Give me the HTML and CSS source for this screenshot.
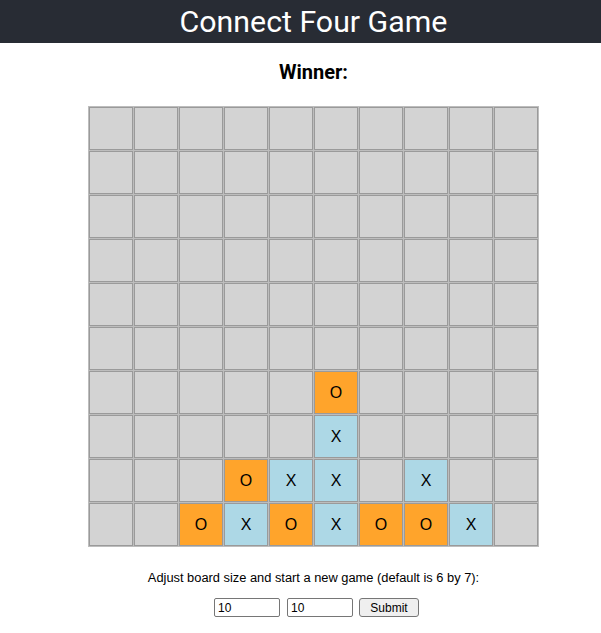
FILE: index.html
```html
<!DOCTYPE html>
<html>
<head>
<meta charset="utf-8">
<link rel="stylesheet" href="styles.css">
</head>
<body>
<div class="app">
  <header class="app-header"><h1 class="title">Connect Four Game</h1></header>
  <h3 class="winner">Winner:</h3>
  <div class="board">
    <div class="cell"></div><div class="cell"></div><div class="cell"></div><div class="cell"></div><div class="cell"></div><div class="cell"></div><div class="cell"></div><div class="cell"></div><div class="cell"></div><div class="cell"></div>
    <div class="cell"></div><div class="cell"></div><div class="cell"></div><div class="cell"></div><div class="cell"></div><div class="cell"></div><div class="cell"></div><div class="cell"></div><div class="cell"></div><div class="cell"></div>
    <div class="cell"></div><div class="cell"></div><div class="cell"></div><div class="cell"></div><div class="cell"></div><div class="cell"></div><div class="cell"></div><div class="cell"></div><div class="cell"></div><div class="cell"></div>
    <div class="cell"></div><div class="cell"></div><div class="cell"></div><div class="cell"></div><div class="cell"></div><div class="cell"></div><div class="cell"></div><div class="cell"></div><div class="cell"></div><div class="cell"></div>
    <div class="cell"></div><div class="cell"></div><div class="cell"></div><div class="cell"></div><div class="cell"></div><div class="cell"></div><div class="cell"></div><div class="cell"></div><div class="cell"></div><div class="cell"></div>
    <div class="cell"></div><div class="cell"></div><div class="cell"></div><div class="cell"></div><div class="cell"></div><div class="cell"></div><div class="cell"></div><div class="cell"></div><div class="cell"></div><div class="cell"></div>
    <div class="cell"></div><div class="cell"></div><div class="cell"></div><div class="cell"></div><div class="cell"></div><div class="cell o">O</div><div class="cell"></div><div class="cell"></div><div class="cell"></div><div class="cell"></div>
    <div class="cell"></div><div class="cell"></div><div class="cell"></div><div class="cell"></div><div class="cell"></div><div class="cell x">X</div><div class="cell"></div><div class="cell"></div><div class="cell"></div><div class="cell"></div>
    <div class="cell"></div><div class="cell"></div><div class="cell"></div><div class="cell o">O</div><div class="cell x">X</div><div class="cell x">X</div><div class="cell"></div><div class="cell x">X</div><div class="cell"></div><div class="cell"></div>
    <div class="cell"></div><div class="cell"></div><div class="cell o">O</div><div class="cell x">X</div><div class="cell o">O</div><div class="cell x">X</div><div class="cell o">O</div><div class="cell o">O</div><div class="cell x">X</div><div class="cell"></div>
  </div>
  <p class="hint">Adjust board size and start a new game (default is 6 by 7):</p>
  <form class="size-form">
    <input class="size-input" type="text" value="10">
    <input class="size-input" type="text" value="10">
    <button class="submit" type="button">Submit</button>
  </form>
</div>
</body>
</html>
```

FILE: styles.css
```css
html, body {
  margin: 0;
  padding: 0;
  overflow: hidden;
  background: #fff;
}
.app {
  width: 627px;
  text-align: center;
  font-family: Roboto, "Liberation Sans", sans-serif;
}
.app-header {
  background: #282c34;
  height: 43px;
  display: flex;
  align-items: center;
  justify-content: center;
}
.title {
  margin: 0;
  color: #fff;
  font-weight: 400;
  font-size: 30.3px;
  line-height: 43px;
}
.winner {
  margin: 18px 0 0;
  font-size: 20px;
  line-height: 23px;
  font-weight: 700;
  color: #000;
}
.board {
  margin: 22px auto 0;
  width: 449px;
  display: grid;
  grid-template-columns: repeat(10, 44px);
  grid-auto-rows: 43px;
  gap: 1px;
  border: 1px solid #bdbdbd;
  background: #bdbdbd;
}
.cell {
  box-sizing: border-box;
  background: #d3d3d3;
  border: 1px solid #9a9a9a;
  display: flex;
  align-items: center;
  justify-content: center;
  font-family: "Liberation Sans", Arial, sans-serif;
  font-size: 16px;
  color: #000;
}
.cell.o { background: #ffa42b; }
.cell.x { background: #add8e6; }
.hint {
  margin: 23px 0 0;
  font-family: "Liberation Sans", Arial, sans-serif;
  font-size: 12.85px;
  line-height: 15px;
}
.size-form {
  margin: 13px 0 0;
  padding-left: 6px;
  display: flex;
  justify-content: center;
  gap: 6px;
}
.size-input {
  box-sizing: border-box;
  width: 66px;
  height: 19px;
  padding: 1px 3px;
  border: 1px solid #767676;
  border-radius: 2px;
  font-family: "Liberation Sans", Arial, sans-serif;
  font-size: 12px;
  text-align: left;
}
.size-input + .size-input {
  margin-left: 1px;
}
.submit {
  box-sizing: border-box;
  width: 60px;
  height: 19px;
  padding: 0;
  border: 1px solid #767676;
  border-radius: 3px;
  background: #efefef;
  font-family: "Liberation Sans", Arial, sans-serif;
  font-size: 12px;
}
```
